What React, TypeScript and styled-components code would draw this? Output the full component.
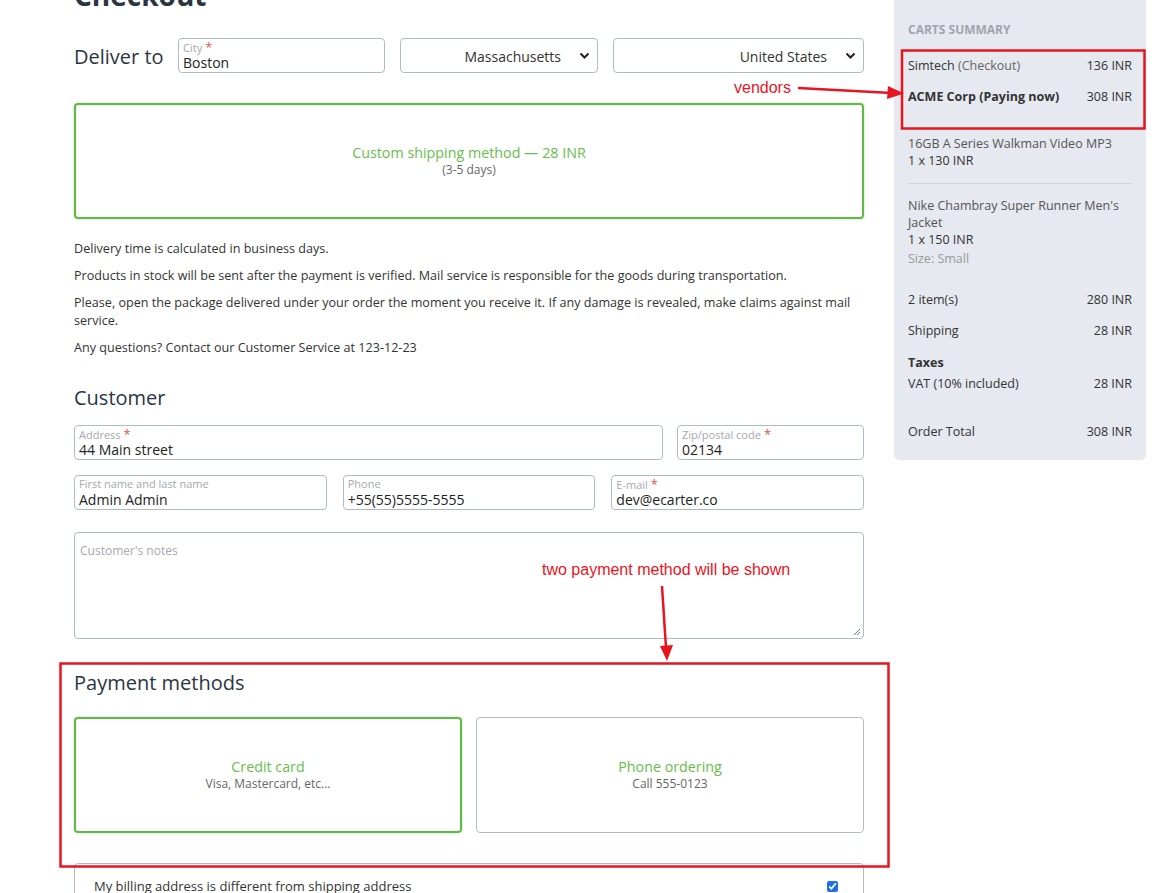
import React from "react";
import styled, { createGlobalStyle } from "styled-components";

const Global = createGlobalStyle`
  html, body { margin: 0; padding: 0; background: #fff; overflow: hidden; }
  body { font-family: "Open Sans", "Noto Sans", sans-serif; color: #333; width: 1156px; height: 893px; }
  * { box-sizing: border-box; }
`;

const Page = styled.div`
  position: relative;
  display: flex;
  align-items: flex-start;
  gap: 30px;
  margin-top: -22px;
  padding-left: 74px;
`;

const Main = styled.div`
  width: 790px;
  display: flex;
  flex-direction: column;
`;

const Title = styled.h1`
  margin: 0 0 26px;
  font-size: 28px;
  line-height: 34px;
  font-weight: 700;
  color: #2b3542;
`;

const DeliverRow = styled.div`
  display: grid;
  grid-template-columns: 89px 207px 198px 1fr;
  gap: 15px;
  align-items: center;
`;

const Heading = styled.h2<{ $top: number; $bottom: number }>`
  margin: ${(p) => p.$top}px 0 ${(p) => p.$bottom}px;
  font-size: 20px;
  line-height: 28px;
  font-weight: 400;
  color: #2b3542;
`;

const InlineHeading = styled(Heading)`
  margin: 3px 0 0;
  white-space: nowrap;
`;

const Field = styled.div`
  height: 35px;
  border: 1px solid #aebbc8;
  border-radius: 4px;
  padding: 2px 5px 0 4px;
  display: flex;
  flex-direction: column;
  background: #fff;
`;

const FieldLabel = styled.span`
  font-size: 11px;
  line-height: 12px;
  height: 13px;
  color: #a5a9ae;
  white-space: nowrap;
`;

const Req = styled.span`
  color: #e0544b;
  font-size: 13px;
  line-height: 12px;
  margin-left: 3px;
`;

const FieldValue = styled.span`
  font-size: 14px;
  line-height: 17px;
  color: #222;
`;

const SelectBox = styled.div`
  height: 35px;
  border: 1px solid #aebbc8;
  border-radius: 4px;
  display: flex;
  align-items: center;
  justify-content: flex-end;
  gap: 18px;
  padding: 1px 7px 0 10px;
  font-size: 14px;
  color: #333;
`;

const OptionCard = styled.div<{ $active?: boolean }>`
  height: 116px;
  border: ${(p) => (p.$active ? "2px solid #5fba45" : "1px solid #b3bcc6")};
  box-shadow: ${(p) => (p.$active ? "0 0 2px rgba(95,186,69,0.6)" : "none")};
  border-radius: 4px;
  display: flex;
  flex-direction: column;
  align-items: center;
  justify-content: center;
  text-align: center;
`;

const OptionTitle = styled.div`
  font-size: 14.3px;
  line-height: 18px;
  color: #68bd4c;
`;

const OptionSub = styled.div`
  font-size: 12px;
  line-height: 16px;
  color: #666;
`;

const Notes = styled.div`
  margin-top: 21px;
  display: flex;
  flex-direction: column;
  gap: 9px;
`;

const P = styled.p`
  margin: 0;
  font-size: 12.6px;
  line-height: 18px;
  color: #333;
`;

const Row = styled.div<{ $cols: string; $gap: number; $mt: number }>`
  display: grid;
  grid-template-columns: ${(p) => p.$cols};
  gap: ${(p) => p.$gap}px;
  margin-top: ${(p) => p.$mt}px;
`;

const TextArea = styled.div`
  margin-top: 22px;
  height: 107px;
  border: 1px solid #aebbc8;
  border-radius: 4px;
  padding: 9px 5px;
  font-size: 12px;
  color: #a5a9ae;
  position: relative;
`;

const Grip = styled.svg`
  position: absolute;
  right: 2px;
  bottom: 2px;
`;

const PayRow = styled.div`
  display: grid;
  grid-template-columns: 1fr 1fr;
  gap: 14px;
  margin-top: 20px;
`;

const Billing = styled.div`
  margin-top: 30px;
  border: 1px solid #b3bcc6;
  border-radius: 4px 4px 0 0;
  height: 60px;
  padding: 13px 20px 0 19px;
  display: flex;
  justify-content: space-between;
  font-size: 13px;
  color: #333;
`;

const Check = styled.input`
  width: 11px;
  height: 11px;
  margin: 4px 5px 0 0;
  accent-color: #1f6fe5;
`;

const Sidebar = styled.aside`
  width: 252px;
  background: #e6e9ef;
  border-radius: 0 0 5px 5px;
  padding: 44px 14px 20px;
  display: flex;
  flex-direction: column;
`;

const SideTitle = styled.div`
  font-size: 12px;
  line-height: 16px;
  font-weight: 700;
  color: #a0a5ad;
  text-transform: uppercase;
  margin-bottom: 19px;
`;

const SumRow = styled.div<{ $bold?: boolean; $mb?: number; $mt?: number }>`
  display: flex;
  justify-content: space-between;
  align-items: flex-start;
  font-size: 12.5px;
  line-height: 17px;
  color: #333;
  font-weight: ${(p) => (p.$bold ? 700 : 400)};
  margin-top: ${(p) => p.$mt ?? 0}px;
  margin-bottom: ${(p) => p.$mb ?? 14}px;
`;

const Muted = styled.span`
  color: #666;
`;

const Price = styled.span`
  font-weight: 400;
  white-space: nowrap;
`;

const Item = styled.div`
  font-size: 12.5px;
  line-height: 17px;
  color: #555;
`;

const ItemQty = styled.div`
  color: #333;
`;

const ItemOpt = styled.div`
  color: #999;
  margin-top: 2px;
`;

const Divider = styled.hr`
  border: none;
  border-top: 1px solid #cfd4dc;
  margin: 14px 0 13px;
`;

const SubLabel = styled.div`
  font-size: 12.5px;
  line-height: 17px;
  font-weight: 700;
  color: #333;
  margin-bottom: 4px;
`;

const Overlay = styled.svg`
  position: absolute;
  left: 0;
  top: 0;
  pointer-events: none;
`;

const Note = styled.span<{ $x: number; $y: number }>`
  position: absolute;
  left: ${(p) => p.$x}px;
  top: ${(p) => p.$y}px;
  font-family: "Liberation Sans", Arial, sans-serif;
  font-size: 16px;
  line-height: 18px;
  color: #e8141e;
  white-space: nowrap;
`;

const Chevron = () => (
  <svg width="11" height="8" viewBox="0 0 11 8">
    <polyline points="1.5,1.5 5.5,5.5 9.5,1.5" fill="none" stroke="#222" strokeWidth="2" />
  </svg>
);

const Input = ({ label, value, req }: { label: string; value: string; req?: boolean }) => (
  <Field>
    <FieldLabel>
      {label}
      {req && <Req>*</Req>}
    </FieldLabel>
    <FieldValue>{value}</FieldValue>
  </Field>
);

export default function App() {
  return (
    <>
      <Global />
      <Page>
        <Main>
          <Title>Checkout</Title>
          <DeliverRow>
            <InlineHeading $top={0} $bottom={0}>Deliver to</InlineHeading>
            <Input label="City" value="Boston" req />
            <SelectBox>
              <span>Massachusetts</span>
              <Chevron />
            </SelectBox>
            <SelectBox>
              <span>United States</span>
              <Chevron />
            </SelectBox>
          </DeliverRow>
          <Row $cols="1fr" $gap={0} $mt={30}>
            <OptionCard $active>
              <OptionTitle>Custom shipping method — 28 INR</OptionTitle>
              <OptionSub>(3-5 days)</OptionSub>
            </OptionCard>
          </Row>
          <Notes>
            <P>Delivery time is calculated in business days.</P>
            <P>Products in stock will be sent after the payment is verified. Mail service is responsible for the goods during transportation.</P>
            <P>Please, open the package delivered under your order the moment you receive it. If any damage is revealed, make claims against mail service.</P>
            <P>Any questions? Contact our Customer Service at 123-12-23</P>
          </Notes>
          <Heading $top={27} $bottom={13}>Customer</Heading>
          <Row $cols="589px 1fr" $gap={14} $mt={0}>
            <Input label="Address" value="44 Main street" req />
            <Input label="Zip/postal code" value="02134" req />
          </Row>
          <Row $cols="1fr 1fr 1fr" $gap={16} $mt={15}>
            <Input label="First name and last name" value="Admin Admin" />
            <Input label="Phone" value="+55(55)5555-5555" />
            <Input label="E-mail" value="dev@ecarter.co" req />
          </Row>
          <TextArea>
            Customer's notes
            <Grip width="8" height="8" viewBox="0 0 8 8">
              <line x1="7" y1="1" x2="1" y2="7" stroke="#777" strokeWidth="1" />
              <line x1="7" y1="4" x2="4" y2="7" stroke="#777" strokeWidth="1" />
            </Grip>
          </TextArea>
          <Heading $top={30} $bottom={0}>Payment methods</Heading>
          <PayRow>
            <OptionCard $active>
              <OptionTitle>Credit card</OptionTitle>
              <OptionSub>Visa, Mastercard, etc...</OptionSub>
            </OptionCard>
            <OptionCard>
              <OptionTitle>Phone ordering</OptionTitle>
              <OptionSub>Call 555-0123</OptionSub>
            </OptionCard>
          </PayRow>
          <Billing>
            <span>My billing address is different from shipping address</span>
            <Check type="checkbox" defaultChecked />
          </Billing>
        </Main>
        <Sidebar>
          <SideTitle>Carts summary</SideTitle>
          <SumRow>
            <span>Simtech <Muted>(Checkout)</Muted></span>
            <Price>136 INR</Price>
          </SumRow>
          <SumRow $bold $mb={30}>
            <span>ACME Corp (Paying now)</span>
            <Price>308 INR</Price>
          </SumRow>
          <Item>
            16GB A Series Walkman Video MP3
            <ItemQty>1 x 130 INR</ItemQty>
          </Item>
          <Divider />
          <Item>
            Nike Chambray Super Runner Men's Jacket
            <ItemQty>1 x 150 INR</ItemQty>
            <ItemOpt>Size: Small</ItemOpt>
          </Item>
          <SumRow $mt={24}>
            <span>2 item(s)</span>
            <Price>280 INR</Price>
          </SumRow>
          <SumRow $mb={15}>
            <span>Shipping</span>
            <Price>28 INR</Price>
          </SumRow>
          <SubLabel>Taxes</SubLabel>
          <SumRow $mb={31}>
            <span>VAT (10% included)</span>
            <Price>28 INR</Price>
          </SumRow>
          <SumRow $mb={0}>
            <span>Order Total</span>
            <Price>308 INR</Price>
          </SumRow>
        </Sidebar>
        <Overlay width="1156" height="915" viewBox="0 -22 1156 915">
          <rect x="902" y="50.5" width="242.5" height="78" fill="none" stroke="#e8141e" strokeWidth="2.5" />
          <rect x="60.5" y="663.5" width="828" height="203" fill="none" stroke="#e8141e" strokeWidth="2.5" />
          <line x1="798" y1="88" x2="892" y2="93" stroke="#e8141e" strokeWidth="2.5" />
          <path d="M888,86 L904,93.5 L887,99 z" fill="#e8141e" />
          <line x1="662" y1="586" x2="666" y2="648" stroke="#e8141e" strokeWidth="2.5" />
          <path d="M660,646 L667,661 L673,645 z" fill="#e8141e" />
        </Overlay>
        <Note $x={734} $y={101}>vendors</Note>
        <Note $x={542} $y={583}>two payment method will be shown</Note>
      </Page>
    </>
  );
}
